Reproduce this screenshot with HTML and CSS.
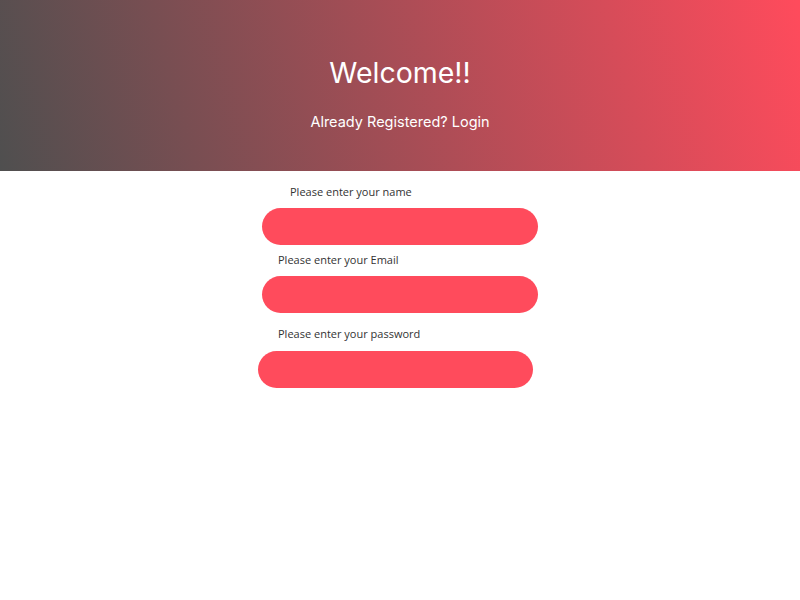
FILE: index.html
```html
<!DOCTYPE html>
<html lang="en">
<head>
<meta charset="utf-8">
<title>Register</title>
<link rel="stylesheet" href="styles.css">
</head>
<body>
<header class="hero">
  <h1 class="hero-title">Welcome!!</h1>
  <p class="hero-sub">Already Registered? Login</p>
</header>
<main class="form">
  <label class="field-label label-name" for="name">Please enter your name</label>
  <input class="field field-name" id="name" type="text">
  <label class="field-label label-email" for="email">Please enter your Email</label>
  <input class="field field-email" id="email" type="email">
  <label class="field-label label-pass" for="pass">Please enter your password</label>
  <input class="field field-pass" id="pass" type="password">
</main>
</body>
</html>
```

FILE: styles.css
```css
html, body {
  margin: 0;
  padding: 0;
  background: #ffffff;
}

body {
  font-family: "Inter", "Liberation Sans", sans-serif;
}

.hero {
  height: 171px;
  box-sizing: border-box;
  padding-top: 53px;
  background: linear-gradient(75deg, #4f4f4f 0%, #ff4b5c 100%);
  color: #ffffff;
  text-align: center;
}

.hero-title {
  margin: 0;
  font-size: 28.5px;
  font-weight: 400;
  line-height: 40px;
}

.hero-sub {
  margin: 19px 0 0;
  font-size: 14.5px;
  line-height: 20px;
  font-weight: 400;
}

.form {
  width: 276px;
  margin: 0 auto;
  display: flex;
  flex-direction: column;
  align-items: flex-start;
}

.field-label {
  font-family: "Open Sans", "Liberation Sans", sans-serif;
  font-size: 11px;
  line-height: 17px;
  color: #333333;
}

.label-name {
  margin: 12px 0 0 28px;
}

.label-email {
  margin: 6px 0 0 16px;
}

.label-pass {
  margin: 12px 0 0 16px;
}

.field {
  box-sizing: border-box;
  width: 276px;
  height: 37px;
  margin-top: 8px;
  border: none;
  border-radius: 19px;
  background: #ff4b5c;
  outline: none;
}

.field-pass {
  width: 275px;
  margin-left: -4px;
  margin-top: 9px;
}
```
